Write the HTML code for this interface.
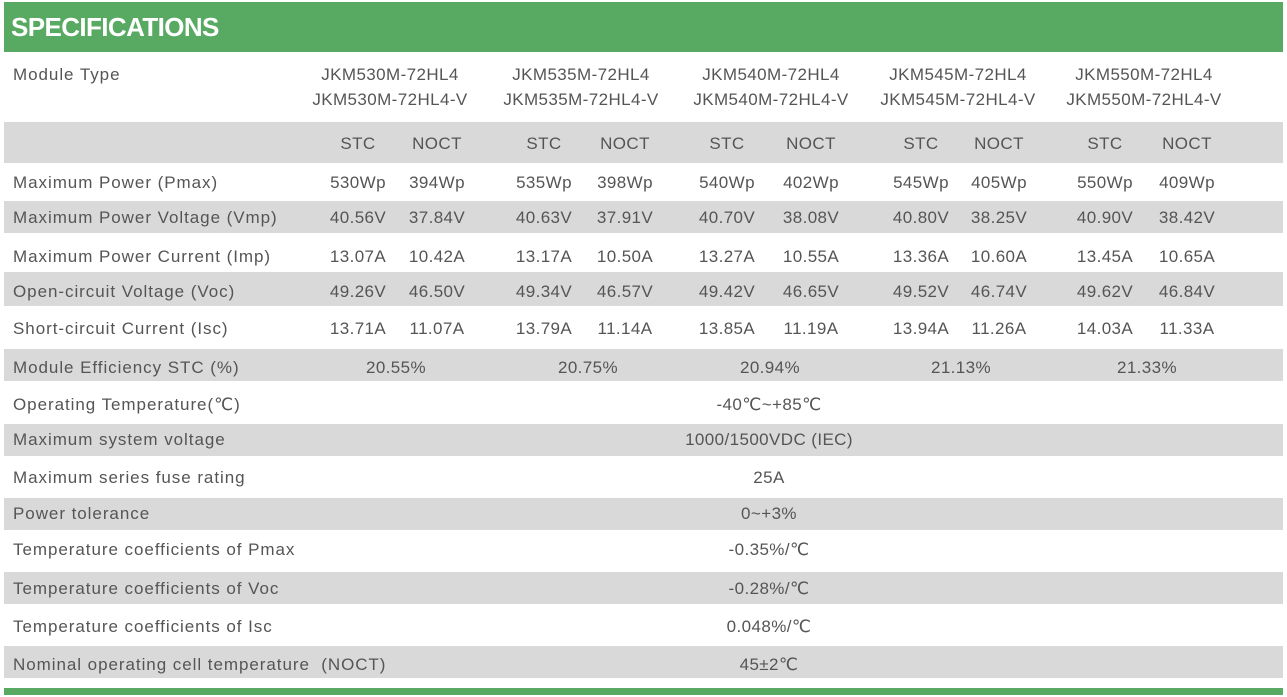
<!DOCTYPE html>
<html><head><meta charset="utf-8"><style>
body{margin:0;width:1287px;height:697px;background:#fff;position:relative;overflow:hidden;font-family:"Liberation Sans","DejaVu Sans",sans-serif;color:#555;}
.b{position:absolute;left:4px;width:1279px;}
.g{background:#d9d9d9}
.t{position:absolute;font-size:17px;white-space:nowrap;line-height:20px;letter-spacing:0.4px}
.l{letter-spacing:0.95px}
.c{transform:translateX(-50%)}
</style></head><body>
<div class="b" style="top:2px;height:50px;background:#58a962"></div>
<div class="t" style="left:11px;top:12px;font-size:26px;font-weight:bold;line-height:30px;color:#fff;letter-spacing:-0.6px">SPECIFICATIONS</div>
<div class="b g" style="top:122px;height:41px"></div>
<div class="b g" style="top:201px;height:32px"></div>
<div class="b g" style="top:272px;height:34px"></div>
<div class="b g" style="top:349px;height:32px"></div>
<div class="b g" style="top:424px;height:32px"></div>
<div class="b g" style="top:498px;height:32px"></div>
<div class="b g" style="top:572px;height:32px"></div>
<div class="b g" style="top:646px;height:32px"></div>
<div class="b" style="top:688px;height:7px;background:#58a962"></div>
<div id="c"></div>
<script>
var h='';function T(x,y,s,c){h+='<div class="t'+(c?' c':' l')+'" style="left:'+x+'px;top:'+(y-9)+'px">'+s+'</div>';}
var L=[["Module Type",74],["Maximum Power (Pmax)",182],["Maximum Power Voltage (Vmp)",217],["Maximum Power Current (Imp)",256],["Open-circuit Voltage (Voc)",291],["Short-circuit Current (Isc)",328],["Module Efficiency STC (%)",367],["Operating Temperature(℃)",404],["Maximum system voltage",439],["Maximum series fuse rating",477],["Power tolerance",513],["Temperature coefficients of Pmax",549],["Temperature coefficients of Voc",588],["Temperature coefficients of Isc",626],["Nominal operating cell temperature&nbsp;&nbsp;(NOCT)",664]];
L.forEach(function(r){T(13,r[1],r[0]);});
var mc=[390,581,771,958,1144],m=["530","535","540","545","550"];
mc.forEach(function(x,i){T(x,74,"JKM"+m[i]+"M-72HL4",1);T(x,99,"JKM"+m[i]+"M-72HL4-V",1);});
var sc=[358,544,727,921,1105],nc=[437,625,811,999,1187];
var rows=[[143,["STC","STC","STC","STC","STC"],["NOCT","NOCT","NOCT","NOCT","NOCT"]],
[182,["530Wp","535Wp","540Wp","545Wp","550Wp"],["394Wp","398Wp","402Wp","405Wp","409Wp"]],
[217,["40.56V","40.63V","40.70V","40.80V","40.90V"],["37.84V","37.91V","38.08V","38.25V","38.42V"]],
[256,["13.07A","13.17A","13.27A","13.36A","13.45A"],["10.42A","10.50A","10.55A","10.60A","10.65A"]],
[291,["49.26V","49.34V","49.42V","49.52V","49.62V"],["46.50V","46.57V","46.65V","46.74V","46.84V"]],
[328,["13.71A","13.79A","13.85A","13.94A","14.03A"],["11.07A","11.14A","11.19A","11.26A","11.33A"]]];
rows.forEach(function(r){for(var i=0;i<5;i++){T(sc[i],r[0],r[1][i],1);T(nc[i],r[0],r[2][i],1);}});
var ec=[396,588,770,961,1147],ev=["20.55%","20.75%","20.94%","21.13%","21.33%"];
ec.forEach(function(x,i){T(x,367,ev[i],1);});
[[404,"-40℃~+85℃"],[439,"1000/1500VDC (IEC)"],[477,"25A"],[513,"0~+3%"],[549,"-0.35%/℃"],[588,"-0.28%/℃"],[626,"0.048%/℃"],[664,"45±2℃"]].forEach(function(r){T(769,r[0],r[1],1);});
document.getElementById('c').innerHTML=h;
</script>
</body></html>
